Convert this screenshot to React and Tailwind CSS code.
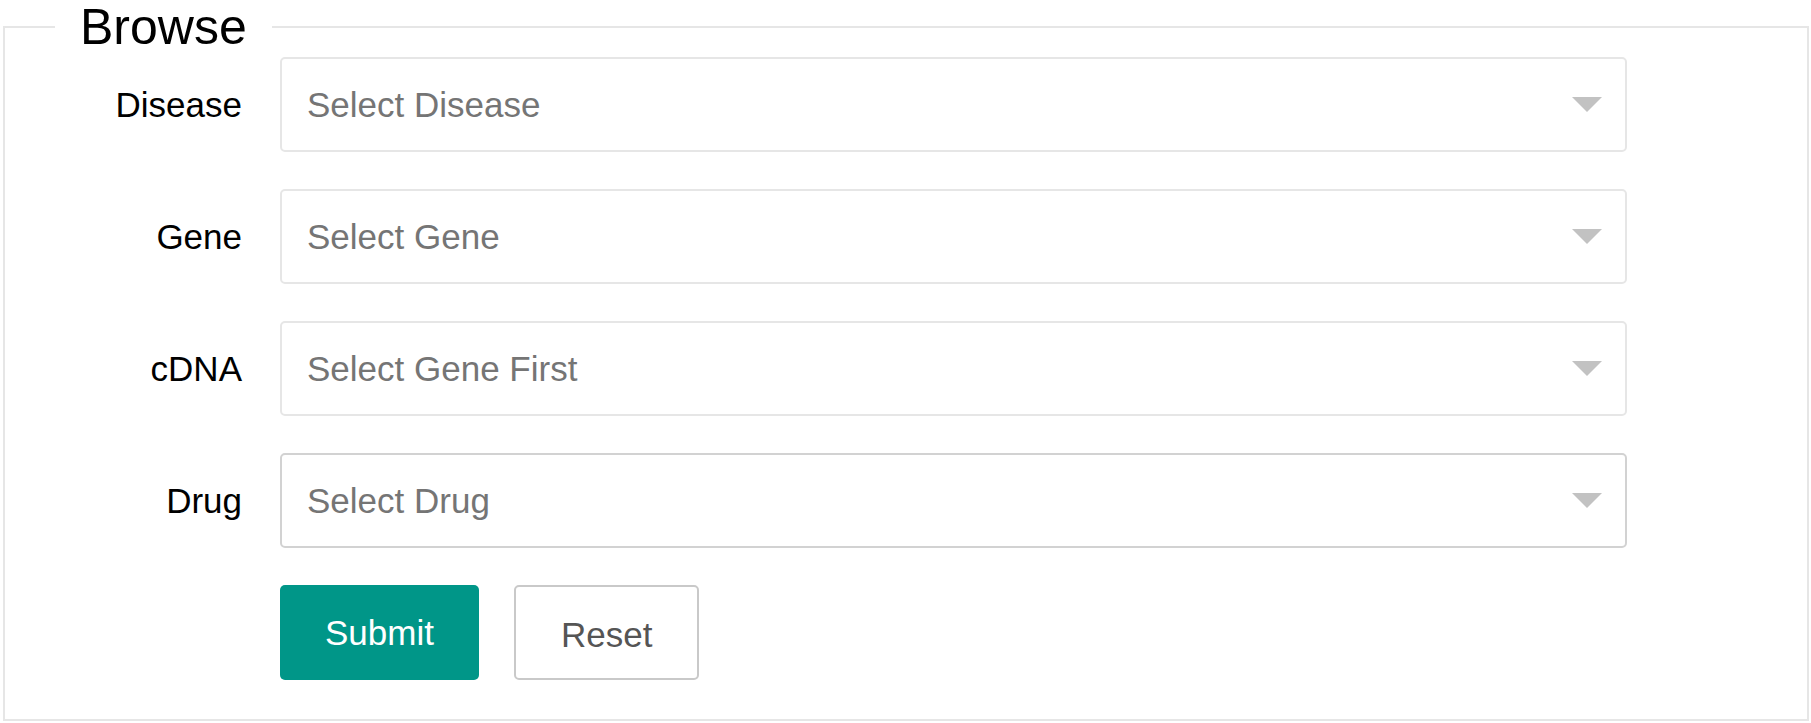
import { useState } from "react";

const FIELDS = [
  { id: "disease", label: "Disease", placeholder: "Select Disease", border: "border-[#e6e6e6]" },
  { id: "gene", label: "Gene", placeholder: "Select Gene", border: "border-[#e6e6e6]" },
  { id: "cdna", label: "cDNA", placeholder: "Select Gene First", border: "border-[#e6e6e6]" },
  { id: "drug", label: "Drug", placeholder: "Select Drug", border: "border-[#d2d2d2]" },
];

function SelectField({ id, label, placeholder, border }) {
  const [value, setValue] = useState("");
  return (
    <div className="flex items-center">
      <label htmlFor={id} className="w-[275px] shrink-0 pr-[38px] text-right text-black">
        {label}
      </label>
      <div className="relative min-w-0 flex-1">
        <select
          id={id}
          name={id}
          value={value}
          onChange={(event) => setValue(event.target.value)}
          className={`block h-[95px] w-full appearance-none rounded-[5px] border-2 bg-white pr-[75px] pl-[25px] text-[#757575] outline-none ${border}`}
        >
          <option value="">{placeholder}</option>
        </select>
        <svg
          aria-hidden="true"
          viewBox="0 0 30 15"
          className="pointer-events-none absolute top-[40px] right-[25px] h-[15px] w-[30px] fill-[#c2c2c2]"
        >
          <path d="M0 0H30L15 15Z" />
        </svg>
      </div>
    </div>
  );
}

export default function App() {
  return (
    <form
      className="bg-white pr-[2px] pl-[3px] font-['Liberation_Sans',Arial,sans-serif] text-[35px] leading-[44px]"
      onSubmit={(event) => event.preventDefault()}
    >
      <fieldset className="min-w-0 border-2 border-[#e6e6e6] pt-[3px] pr-[180px] pb-[39px]">
        <legend className="ml-[50px] px-[25px] text-[50px] leading-[54px] text-black">Browse</legend>
        <div className="flex flex-col gap-[37px]">
          {FIELDS.map((field) => (
            <SelectField key={field.id} {...field} />
          ))}
          <div className="flex gap-[35px] pl-[275px]">
            <button
              type="submit"
              className="h-[95px] rounded-[5px] bg-[#009688] px-[45px] leading-[95px] text-white"
            >
              Submit
            </button>
            <button
              type="reset"
              className="h-[95px] rounded-[5px] border-2 border-[#c9c9c9] bg-white px-[45px] leading-[95px] text-[#555555]"
            >
              Reset
            </button>
          </div>
        </div>
      </fieldset>
    </form>
  );
}
